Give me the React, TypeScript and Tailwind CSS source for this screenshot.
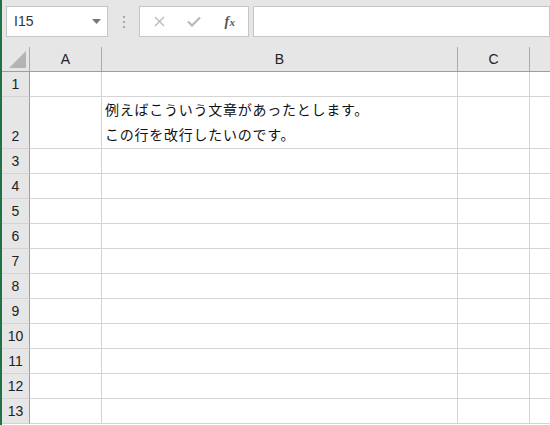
import React from "react";

const rowHeights = [25, 52, 25, 25, 25, 25, 25, 25, 25, 25, 25, 25, 25];

export default function App() {
  return (
    <div className="w-[550px] h-[425px] overflow-hidden bg-white border-l-2 border-[#217346] flex flex-col" style={{ fontFamily: '"Liberation Sans", "Noto Sans CJK JP", sans-serif' }}>
      {/* formula bar */}
      <div className="h-[47px] shrink-0 bg-[#e6e6e6] flex items-start pt-[6px] pl-[4px]">
        <div className="w-[102px] h-[31px] bg-white border border-[#c6c6c6] flex items-center justify-between pl-[7px] pr-[6px]">
          <span className="text-[14px] text-[#333]">I15</span>
          <svg width="9" height="5" viewBox="0 0 9 5"><path d="M0 0 H9 L4.5 5 Z" fill="#777" /></svg>
        </div>
        <div className="w-[31px] h-[31px] flex flex-col items-center justify-center gap-[3px]">
          <div className="w-[2px] h-[2px] bg-[#a8a8a8]" />
          <div className="w-[2px] h-[2px] bg-[#a8a8a8]" />
          <div className="w-[2px] h-[2px] bg-[#a8a8a8]" />
        </div>
        <div className="w-[110px] h-[31px] bg-white border border-[#c6c6c6] flex items-center">
          <div className="w-[36px] flex justify-center pl-[2px]">
            <svg width="11" height="11" viewBox="0 0 11 11"><path d="M1 1 L10 10 M10 1 L1 10" stroke="#b8b8b8" strokeWidth="1.3" /></svg>
          </div>
          <div className="w-[36px] flex justify-center">
            <svg width="14" height="11" viewBox="0 0 14 11"><path d="M1 5.5 L5 9.5 L13 1.5" stroke="#b8b8b8" strokeWidth="2.2" fill="none" /></svg>
          </div>
          <div className="w-[36px] flex justify-center">
            <span className="text-[14px] italic text-[#555] font-bold tracking-[0.5px]" style={{ fontFamily: '"Liberation Serif", serif' }}>f<span className="text-[11px]">x</span></span>
          </div>
        </div>
        <div className="ml-[4px] flex-1 h-[31px] bg-white border border-[#c6c6c6]" />
      </div>

      {/* column header */}
      <div className="h-[25px] shrink-0 bg-[#e6e6e6] flex border-b border-[#9e9e9e] text-[14px] text-[#222]">
        <div className="w-[28px] shrink-0 border-r border-[#ababab] relative">
          <svg className="absolute left-[7px] top-[4px]" width="17" height="17" viewBox="0 0 17 17"><path d="M17 0 V17 H0 Z" fill="#b4b4b4" /></svg>
        </div>
        <div className="w-[72px] shrink-0 border-r border-[#ababab] flex items-center justify-center">A</div>
        <div className="w-[356px] shrink-0 border-r border-[#ababab] flex items-center justify-center">B</div>
        <div className="w-[72px] shrink-0 border-r border-[#ababab] flex items-center justify-center">C</div>
        <div className="flex-1" />
      </div>

      {/* rows */}
      {rowHeights.map((h, i) => (
        <div key={i} className="flex shrink-0" style={{ height: h }}>
          <div className={`w-[28px] shrink-0 bg-[#e6e6e6] border-r border-b border-r-[#9e9e9e] border-b-[#d4d4d4] flex justify-center text-[14px] text-[#222] leading-[24px] ${i === 1 ? "items-end" : "items-center"}`}>
            {i + 1}
          </div>
          <div className="w-[72px] shrink-0 border-r border-b border-[#d4d4d4]" />
          <div className="w-[356px] shrink-0 border-r border-b border-[#d4d4d4] flex flex-col justify-end pl-[3px]">
            {i === 1 && (
              <div className="text-[14px] leading-[25px] text-[#111] tracking-[0.75px] pb-[1px]" style={{ fontFamily: '"Noto Sans CJK JP", sans-serif' }}>
                <div>例えばこういう文章があったとします。</div>
                <div>この行を改行したいのです。</div>
              </div>
            )}
          </div>
          <div className="w-[72px] shrink-0 border-r border-b border-[#d4d4d4]" />
          <div className="flex-1 border-b border-[#d4d4d4]" />
        </div>
      ))}
    </div>
  );
}
